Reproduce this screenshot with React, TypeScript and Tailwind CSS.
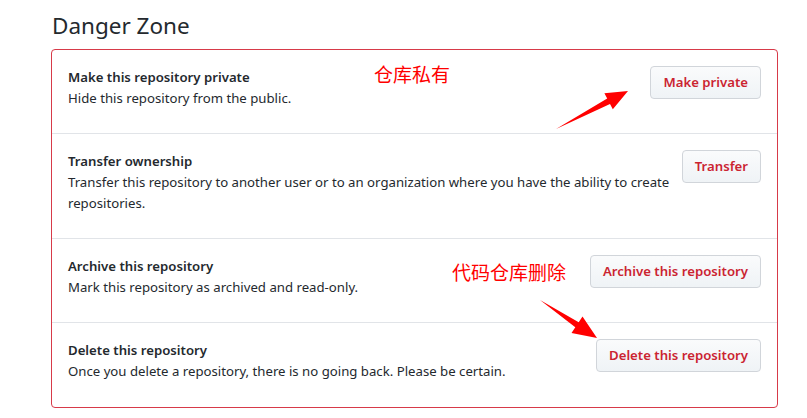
const rows = [
  {
    title: 'Make this repository private',
    desc: 'Hide this repository from the public.',
    action: 'Make private',
    h: 'h-[83px]',
  },
  {
    title: 'Transfer ownership',
    desc: 'Transfer this repository to another user or to an organization where you have the ability to create repositories.',
    action: 'Transfer',
    h: 'h-[105px]',
  },
  {
    title: 'Archive this repository',
    desc: 'Mark this repository as archived and read-only.',
    action: 'Archive this repository',
    h: 'h-[84px]',
  },
  {
    title: 'Delete this repository',
    desc: 'Once you delete a repository, there is no going back. Please be certain.',
    action: 'Delete this repository',
    h: 'h-[85px]',
  },
];

const DangerButton = ({ children }: { children: React.ReactNode }) => (
  <button className="h-[33px] shrink-0 rounded-[4px] border border-[#d1d5da] bg-gradient-to-b from-[#fafbfc] to-[#eff3f6] px-3 text-[13.2px] font-semibold text-[#cb2431]">
    {children}
  </button>
);

export default function App() {
  return (
    <div
      className="relative h-[418px] w-[807px] overflow-hidden bg-white text-[#24292e]"
      style={{ fontFamily: '"Noto Sans", "Open Sans", sans-serif' }}
    >
      <div className="ml-[51px] w-[727px] pt-[10px]">
        <h2 className="mb-2 pl-px text-[22.5px] font-normal leading-[31px]">Danger Zone</h2>
        <div className="rounded-[4px] border border-[#d73a49]">
          {rows.map((row, i) => (
            <div
              key={row.title}
              className={`flex items-start gap-[4px] px-4 pt-[16px] ${i > 0 ? 'border-t border-[#e1e4e8]' : ''} ${row.h}`}
            >
              <div className="flex-1 pt-[1px] text-[13.2px] leading-[21px]">
                <div className="font-semibold">{row.title}</div>
                <div>{row.desc}</div>
              </div>
              <DangerButton>{row.action}</DangerButton>
            </div>
          ))}
        </div>
      </div>

      {/* annotations */}
      <div
        className="absolute left-[374px] top-[62px] text-[19px] leading-6 text-[#ff0000]"
        style={{ fontFamily: '"Noto Sans CJK SC", sans-serif' }}
      >
        仓库私有
      </div>
      <div
        className="absolute left-[452px] top-[260px] text-[19px] leading-6 text-[#ff0000]"
        style={{ fontFamily: '"Noto Sans CJK SC", sans-serif' }}
      >
        代码仓库删除
      </div>
      <svg className="pointer-events-none absolute inset-0" width="807" height="418">
        <polygon
          points="556,129 607.2,98.6 604.4,93.3 628,91 612.8,109.3 610,104"
          fill="#ff0000"
        />
        <polygon
          points="540,300 578.7,322.2 582.5,316.4 597,338 571.5,333 575.3,327.2"
          fill="#ff0000"
        />
      </svg>
    </div>
  );
}
